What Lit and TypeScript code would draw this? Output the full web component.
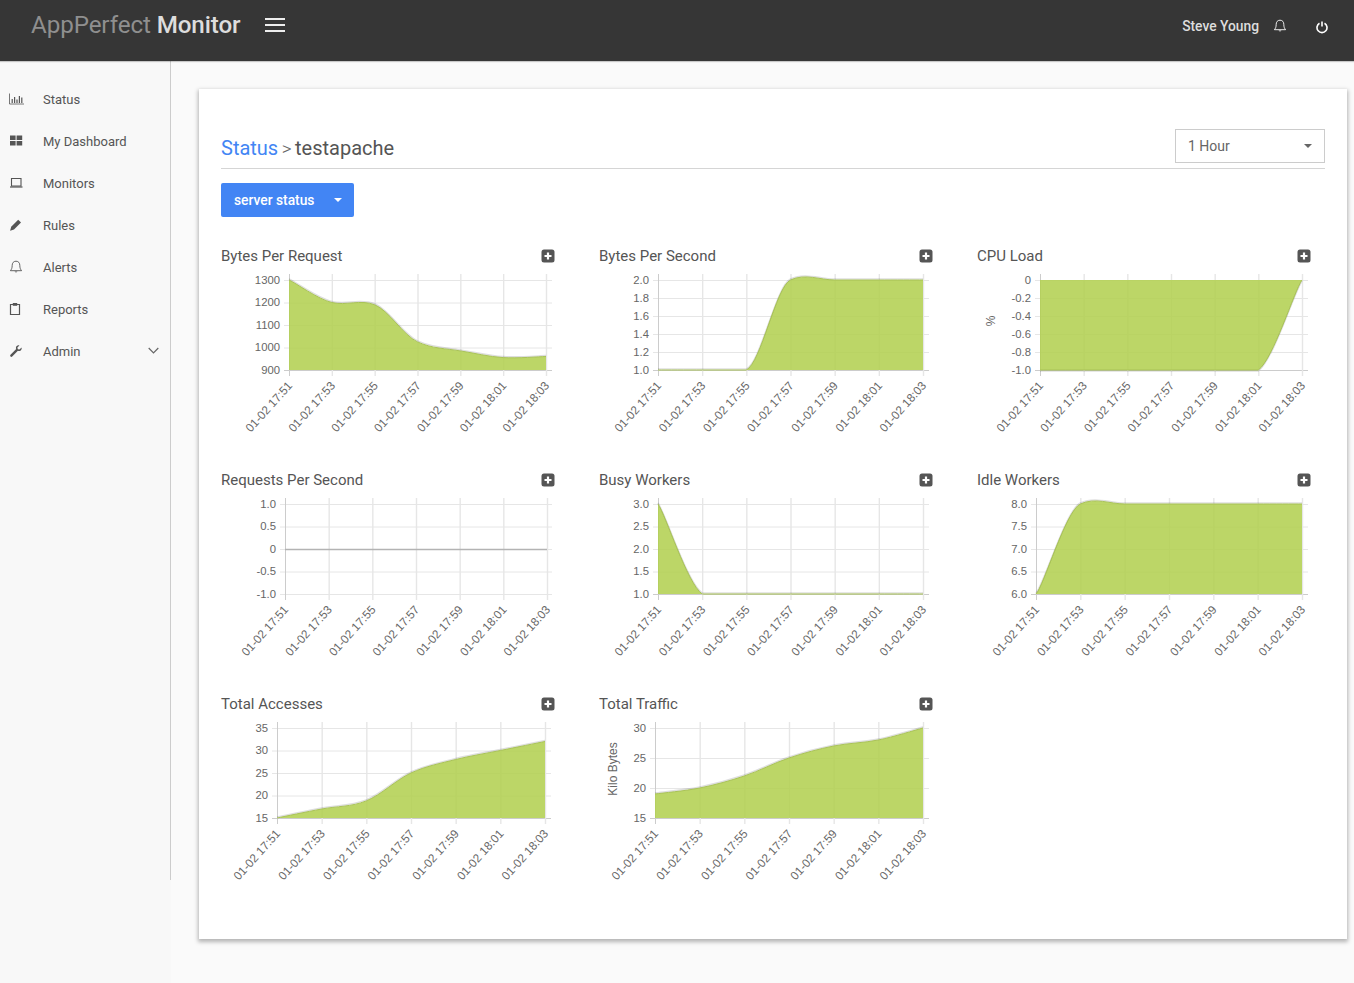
import { LitElement, html, css, svg } from "lit";
import { customElement } from "lit/decorators.js";

interface Chart {
  title: string; x0: number; x1: number; end: number;
  ticks: string[]; data: number[]; min: number; max: number;
  fromTop?: boolean; yName?: string; yNameX?: number; k?: number;
}

const TIMES = ["01-02 17:51", "01-02 17:53", "01-02 17:55", "01-02 17:57", "01-02 17:59", "01-02 18:01", "01-02 18:03"];
const TOP = 12, BOT = 102;

const CHARTS: Chart[] = [
  { title: "Bytes Per Request", x0: 68, x1: 325, end: 331, ticks: ["1300", "1200", "1100", "1000", "900"], data: [1300, 1200, 1190, 1025, 985, 955, 960], min: 900, max: 1300, k: 7 },
  { title: "Bytes Per Second", x0: 59, x1: 324, end: 330, ticks: ["2.0", "1.8", "1.6", "1.4", "1.2", "1.0"], data: [1, 1, 1, 2, 2, 2, 2], min: 1, max: 2, k: 13 },
  { title: "CPU Load", x0: 63, x1: 325, end: 331, ticks: ["0", "-0.2", "-0.4", "-0.6", "-0.8", "-1.0"], data: [-1, -1, -1, -1, -1, -1, 0], min: -1, max: 0, fromTop: true, yName: "%", yNameX: 14, k: 9 },
  { title: "Requests Per Second", x0: 64, x1: 326, end: 331, ticks: ["1.0", "0.5", "0", "-0.5", "-1.0"], data: [0, 0, 0, 0, 0, 0, 0], min: 0, max: 0 },
  { title: "Busy Workers", x0: 59, x1: 324, end: 330, ticks: ["3.0", "2.5", "2.0", "1.5", "1.0"], data: [3, 1, 1, 1, 1, 1, 1], min: 1, max: 3, k: 9 },
  { title: "Idle Workers", x0: 59, x1: 325, end: 331, ticks: ["8.0", "7.5", "7.0", "6.5", "6.0"], data: [6, 8, 8, 8, 8, 8, 8], min: 6, max: 8, k: 13 },
  { title: "Total Accesses", x0: 56, x1: 324, end: 330, ticks: ["35", "30", "25", "20", "15"], data: [15, 17, 18.8, 25, 28, 30, 32], min: 15, max: 35 },
  { title: "Total Traffic", x0: 56, x1: 324, end: 330, ticks: ["30", "25", "20", "15"], data: [19, 20, 22, 25, 27, 28, 30], min: 15, max: 30, yName: "Kilo Bytes", yNameX: 14 },
];

function linePath(c: Chart): { d: string; xs: number[] } {
  const xs = TIMES.map((_, i) => c.x0 + (c.x1 - c.x0) * i / 6);
  const span = c.max - c.min;
  const ys = c.data.map(v => span === 0 ? (TOP + BOT) / 2 : BOT - (v - c.min) / span * (BOT - TOP));
  let d = `M${xs[0]} ${ys[0]}`;
  const k = c.k ?? 6;
  for (let i = 0; i < 6; i++) {
    const p0 = Math.max(i - 1, 0), p3 = Math.min(i + 2, 6);
    const c1x = xs[i] + (xs[i + 1] - xs[p0]) / 6;
    const c1y = Math.min(BOT, ys[i] + (ys[i + 1] - ys[p0]) / k);
    const c2x = xs[i + 1] - (xs[p3] - xs[i]) / 6;
    const c2y = Math.min(BOT, ys[i + 1] - (ys[p3] - ys[i]) / k);
    d += ` C${c1x.toFixed(1)} ${c1y.toFixed(1)} ${c2x.toFixed(1)} ${c2y.toFixed(1)} ${xs[i + 1].toFixed(1)} ${ys[i + 1].toFixed(1)}`;
  }
  return { d, xs };
}

const I = {
  status: svg`<path d="M.5 1.500v10.500h14.500" fill="none" stroke="currentColor" stroke-width=".8"/><path d="M2.600 7h1.200v4H2.600zM5 5h1.200v6H5zM7.400 7.500h1.200v3.500H7.400zM9.800 4h1.200v7H9.800zM12.200 5.500h1.200v5.500h-1.200z" fill="currentColor"/>`,
  dash: svg`<path d="M1 1.500h5.600v4.500H1zM7.600 1.500h5.600v4.500H7.600zM1 7h5.600v4.500H1zM7.600 7h5.600v4.500H7.600z" fill="currentColor"/>`,
  monitors: svg`<path d="M2.500 2.500h9.500v7.500H2.500z" fill="none" stroke="currentColor" stroke-width="1.100"/><path d="M1 10.400h12.500v1.200H1z" fill="currentColor"/>`,
  rules: svg`<path d="M9.200 1.800l2.800 2.800-7 7-3.900 1.100 1.100-3.900z" fill="currentColor"/>`,
  alerts: svg`<path d="M7 1.200c-2.600 0-3.800 1.900-3.800 4.100 0 2.900-.8 4.200-1.800 5.400h11.200c-1-1.200-1.800-2.500-1.800-5.400 0-2.200-1.200-4.100-3.800-4.100z" fill="none" stroke="currentColor" stroke-width=".9"/><path d="M5.600 11.400a1.500 1.500 0 0 0 2.800 0z" fill="currentColor"/>`,
  reports: svg`<path d="M1.500 2.500h9v10h-9z" fill="none" stroke="currentColor" stroke-width="1.200"/><path d="M3.800 1h4.400v2.800H3.800z" fill="currentColor"/>`,
  admin: svg`<path d="M12.600 3.600l-2.200 2-1.600-.4-.4-1.600 2-2.200C8.700 1 7 1.900 6.900 3.700c0 .6.100 1 .3 1.400L1.500 10.800c-.5.500-.5 1.200 0 1.700s1.200.5 1.700 0l5.700-5.700c.4.200.9.300 1.400.300 1.800-.1 2.700-1.800 2.300-3.500z" fill="currentColor"/>`,
};

@customElement("app-root")
export class AppRoot extends LitElement {
  static styles = css`
    :host { display: block; height: 983px; overflow: hidden; background: #fafafa; color: #555; font-family: Roboto, "Liberation Sans", sans-serif; }
    .top { height: 61px; background: #363636; box-shadow: 0 1px 1px rgba(0,0,0,.2); display: flex; align-items: center; padding: 0 26px 0 31px; box-sizing: border-box; position: relative; }
    .brand { font-size: 24.2px; color: #8f8f8f; margin-top: -11px; letter-spacing: -.1px; }
    .brand b { font-weight: 500; color: #ddd; }
    .burger { margin: -11px 0 0 24px; display: flex; }
    .spacer { flex: 1; }
    .user { font-size: 13.8px; font-weight: 500; color: #ddd; margin-top: -9px; }
    .ico-bell { margin: -9px 0 0 14px; display: flex; color: #fff; }
    .ico-power { margin: -8px 0 0 29px; display: flex; color: #fff; }
    .body { display: flex; height: 922px; }
    .side { width: 171px; flex: none; background: #f8f8f8; }
    .nav { height: 819px; box-sizing: border-box; border-right: 1px solid #ccc; padding-top: 17px; }
    .item { height: 42px; display: flex; align-items: center; font-size: 13px; color: #555; }
    .item svg.i { width: 16px; height: 14px; margin: 0 18px 0 9px; color: #555; flex: none; }
    .item .chev { margin-left: auto; margin-right: 11px; margin-top: -2px; color: #666; display: flex; }
    .main { flex: 1; padding: 28px 7px 0 28px; min-width: 0; }
    .card { height: 850px; box-sizing: border-box; background: #fff; box-shadow: 0 2px 4px 1px rgba(0,0,0,.28); padding: 40px 22px 0; }
    .head { display: flex; align-items: flex-start; justify-content: space-between; height: 40px; border-bottom: 1px solid #d5d5d5; box-sizing: border-box; }
    .crumb { font-size: 20px; color: #555; margin-top: 7px; }
    .crumb a { color: #4285f4; }
    .crumb i { font-style: normal; color: #666; font-size: 19px; font-weight: 300; margin: 0 3.5px; }
    .select { width: 150px; height: 34px; box-sizing: border-box; border: 1px solid #ccc; display: flex; align-items: center; justify-content: space-between; padding: 0 12px 0 12px; font-size: 14px; color: #666; }
    .caret { width: 0; height: 0; border-left: 4px solid transparent; border-right: 4px solid transparent; border-top: 4px solid #666; }
    .btn { margin-top: 14px; width: 133px; height: 34px; box-sizing: border-box; background: #4285f4; color: #fff; font-size: 13.8px; font-weight: 500; border-radius: 2px; display: flex; align-items: center; justify-content: space-between; padding: 0 12px 0 13px; }
    .btn .caret { border-top-color: #fff; }
    .grid { margin-top: 28px; display: grid; grid-template-columns: repeat(3, 333px); column-gap: 45px; grid-auto-rows: 224px; }
    .title { height: 20px; display: flex; align-items: center; justify-content: space-between; font-size: 15px; color: #555; padding-top: 1px; box-sizing: border-box; }
    .title svg { margin-right: -1px; }
    .plot { display: block; margin-top: 3px; width: 333px; height: 198px; overflow: visible; }
    .plot text { font-family: "Liberation Sans", Arial, sans-serif; font-size: 11.3px; fill: #666; }
    .plot text.xl { font-size: 11.8px; }
    .plot text.yn { font-size: 12px; }
    .g { stroke: #e6e6e6; stroke-width: 1; }
    .v { stroke: #e6e6e6; stroke-width: 1.4; }
    .a { stroke: #ccc; stroke-width: 1; }
    .area { fill: rgb(176, 207, 76); fill-opacity: .85; stroke: none; }
    .edge { fill: none; stroke: #a9c357; stroke-width: 1; }
    .halo { fill: none; stroke: rgba(0,0,0,.13); stroke-width: 1.5; }
    .flat { stroke: #b3b3b3; stroke-width: 1.5; }
  `;

  private chart(c: Chart) {
    const { d, xs } = linePath(c);
    const n = c.ticks.length;
    const tickY = c.ticks.map((_, i) => TOP + (BOT - TOP) * i / (n - 1));
    const base = c.fromTop ? TOP : BOT;
    const flat = c.max === c.min;
    return svg`
      ${tickY.map((y, i) => svg`
        <line class=${i === n - 1 && !flat ? "a" : "g"} x1=${c.x0 - 5} x2=${c.end} y1=${y + .5} y2=${y + .5}></line>
        <text x=${c.x0 - 9} y=${y + 3.6} text-anchor="end">${c.ticks[i]}</text>`)}
      ${xs.map((x, i) => svg`
        <line class=${i === 0 ? "a" : "v"} x1=${x + .5} x2=${x + .5} y1=${TOP - 6} y2=${BOT + 6}></line>
        <text class="xl" transform="translate(${x + 4} ${BOT + 16}) rotate(-48)" text-anchor="end">${TIMES[i]}</text>`)}
      ${flat
        ? svg`<line class="flat" x1=${c.x0} x2=${c.x1} y1=${(TOP + BOT) / 2 + .5} y2=${(TOP + BOT) / 2 + .5}></line>`
        : svg`
          <path class="area" d="${d} L${c.x1} ${base} L${c.x0} ${base} Z"></path>
          <path class="halo" d=${d} transform="translate(0 ${c.fromTop ? 1 : -1})"></path>
          <path class="edge" d=${d}></path>`}
      ${c.yName ? svg`<text class="yn" transform="translate(${c.yNameX} ${(TOP + BOT) / 2 - 4}) rotate(-90)" text-anchor="middle" dy=".35em">${c.yName}</text>` : ""}
    `;
  }

  render() {
    const nav: [string, unknown][] = [["Status", I.status], ["My Dashboard", I.dash], ["Monitors", I.monitors], ["Rules", I.rules], ["Alerts", I.alerts], ["Reports", I.reports], ["Admin", I.admin]];
    return html`
      <div class="top">
        <div class="brand">AppPerfect <b>Monitor</b></div>
        <div class="burger"><svg width="20" height="14" viewBox="0 0 20 14"><path d="M0 1h20M0 7h20M0 13h20" stroke="#eee" stroke-width="2"/></svg></div>
        <div class="spacer"></div>
        <div class="user">Steve Young</div>
        <div class="ico-bell"><svg width="14" height="16" viewBox="0 0 14 14">${I.alerts}</svg></div>
        <div class="ico-power"><svg width="12" height="14" viewBox="0 0 12 14"><path d="M3.5 3.300a5 5 0 1 0 5 0" fill="none" stroke="currentColor" stroke-width="1.6"/><path d="M6 1.500v5" stroke="currentColor" stroke-width="1.6"/></svg></div>
      </div>
      <div class="body">
        <div class="side">
          <div class="nav">
            ${nav.map(([name, ic]) => html`<div class="item">
              <svg class="i" viewBox="0 0 16 14">${ic}</svg><span>${name}</span>
              ${name === "Admin" ? html`<span class="chev"><svg width="11" height="7" viewBox="0 0 11 7"><path d="M.7 1l4.800 4.800L10.300 1" fill="none" stroke="currentColor" stroke-width="1.2"/></svg></span>` : ""}
            </div>`)}
          </div>
        </div>
        <div class="main">
          <div class="card">
            <div class="head">
              <div class="crumb"><a>Status</a><i>&gt;</i>testapache</div>
              <div class="select"><span>1 Hour</span><span class="caret"></span></div>
            </div>
            <div class="btn"><span>server status</span><span class="caret"></span></div>
            <div class="grid">
              ${CHARTS.map(c => html`<div>
                <div class="title"><span>${c.title}</span>
                  <svg width="14" height="14" viewBox="0 0 14 14"><rect x=".5" y=".5" width="13" height="13" rx="2.5" fill="#555"/><path d="M7 3.500v7M3.500 7h7" stroke="#fff" stroke-width="2.2"/></svg>
                </div>
                <svg class="plot" viewBox="0 0 333 198">${this.chart(c)}</svg>
              </div>`)}
            </div>
          </div>
        </div>
      </div>
    `;
  }
}
